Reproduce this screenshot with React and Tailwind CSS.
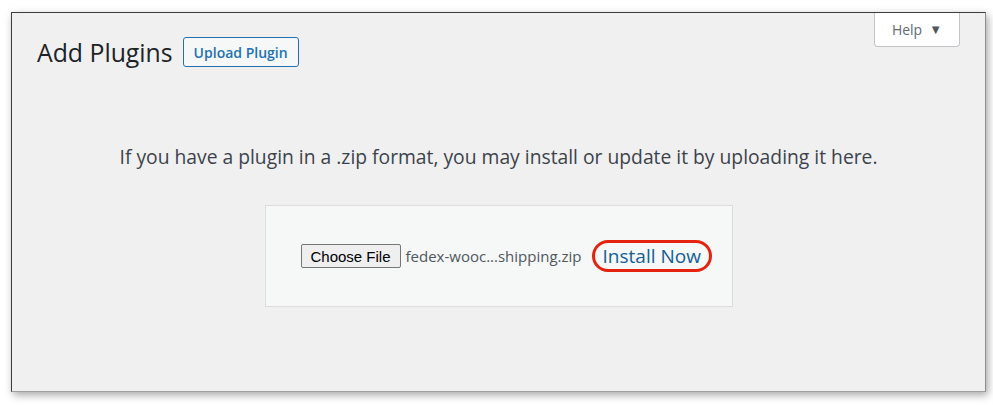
import React from 'react';

const ui = { fontFamily: '"Open Sans", "Noto Sans", sans-serif' };

function HelpTab() {
  return (
    <button
      className="h-[34px] w-[86px] bg-white border border-t-0 border-[#c3c4c7] rounded-b-[4px] flex items-center justify-center gap-[7px] text-[14px] text-[#646970]"
      style={ui}
    >
      Help
      <span className="text-[13px] leading-none text-[#50575e]">▼</span>
    </button>
  );
}

export default function AddPlugins() {
  return (
    <div className="w-[993px] h-[405px] bg-white pl-[11px] pt-[12px]">
      <div
        className="w-[975px] h-[380px] bg-[#f0f0f1] border-t border-l border-[#3c3c3c] border-r border-b border-r-[#8c8c8c] border-b-[#a0a0a0] shadow-[2px_3px_8px_rgba(0,0,0,0.35)] flex flex-col"
        style={ui}
      >
        <div className="flex items-start justify-between pl-[25px] pr-[25px]">
          <div className="flex items-center mt-[24px]">
            <h1 className="text-[24.8px] font-normal text-[#1d2327] leading-[30px]">Add Plugins</h1>
            <button className="ml-[10px] h-[30px] px-[10px] border border-[#2271b1] rounded-[3px] text-[14px] font-semibold text-[#2271b1] bg-[#f6f7f7]">
              Upload Plugin
            </button>
          </div>
          <HelpTab />
        </div>

        <p className="mt-[77px] text-center text-[19.3px] text-[#3c434a] leading-[26px]">
          If you have a plugin in a .zip format, you may install or update it by uploading it here.
        </p>

        <div className="mt-[35px] mx-auto w-[468px] h-[102px] bg-[#f6f7f7] border border-[#dcdcde] flex items-center pl-[35px]">
          <button
            className="h-[24px] px-[9px] bg-[#efefef] border border-[#767676] rounded-[2px] text-[15px] text-black leading-none"
            style={{ fontFamily: '"Liberation Sans", Arial, sans-serif' }}
          >
            Choose File
          </button>
          <span className="ml-[5px] text-[15px] text-[#50575e]">fedex-wooc...shipping.zip</span>
          <span className="ml-[10px] h-[32px] px-[8px] border-[3px] border-[#e3230d] rounded-full flex items-center text-[19px] text-[#135e96]">
            Install Now
          </span>
        </div>
      </div>
    </div>
  );
}
